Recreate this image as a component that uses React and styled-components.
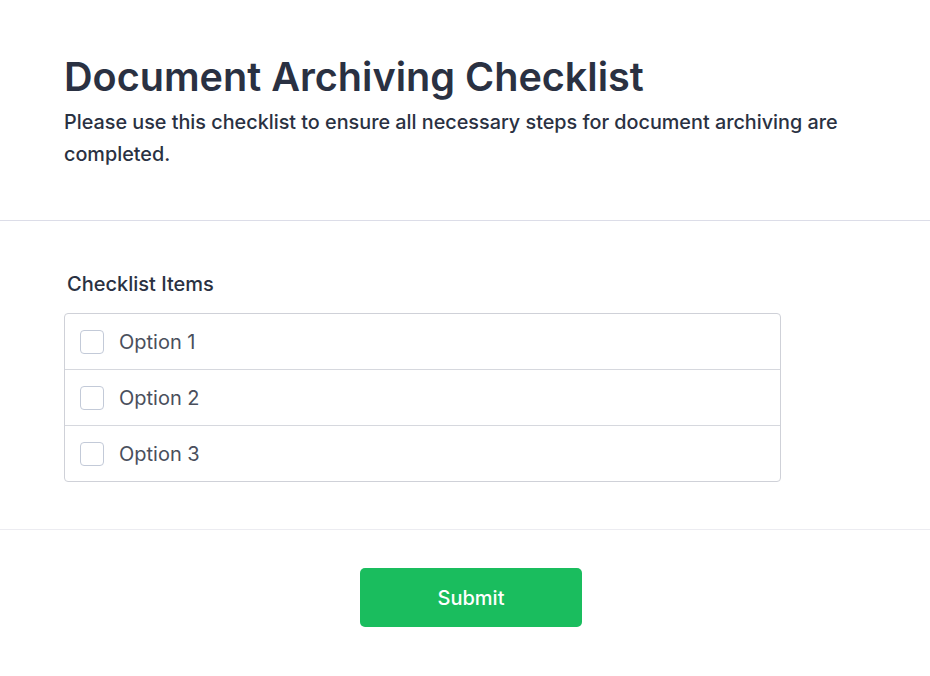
import React from 'react';
import styled, { createGlobalStyle } from 'styled-components';

const GlobalStyle = createGlobalStyle`
    body {
        margin: 0;
        background: #ffffff;
        font-family: Inter, "Noto Sans", sans-serif;
    }
`;

const Page = styled.div`
    width: 930px;
    min-height: 676px;
    background: #ffffff;
`;

const Header = styled.header`
    padding: 53px 64px 50px;
    border-bottom: 1px solid #dcdde8;
`;

const Title = styled.h1`
    margin: 0 0 5px;
    font-size: 39.6px;
    line-height: 48px;
    font-weight: 600;
    color: #2a3142;
`;

const Subtitle = styled.p`
    margin: 0;
    max-width: 800px;
    font-size: 19.8px;
    line-height: 32px;
    font-weight: 500;
    color: #2a3142;
`;

const Section = styled.section`
    padding: 51px 64px 47px;
    border-bottom: 1px solid #ececf1;
`;

const Label = styled.div`
    margin: 0 0 17px 3px;
    font-size: 20px;
    line-height: 24px;
    font-weight: 500;
    color: #2a3142;
`;

const List = styled.div`
    width: 715px;
    border: 1px solid #cfd1d8;
    border-radius: 4px;
    background: #fff;
`;

const Row = styled.label`
    display: flex;
    align-items: center;
    gap: 15px;
    height: 55px;
    padding: 0 15px;
    & + & {
        border-top: 1px solid #d6d8de;
    }
`;

const Box = styled.span`
    width: 24px;
    height: 24px;
    box-sizing: border-box;
    border: 1px solid #c3cad8;
    border-radius: 4px;
    background: #fff;
`;

const OptionText = styled.span`
    font-size: 20px;
    color: #4a4f5c;
`;

const Footer = styled.div`
    display: flex;
    justify-content: center;
    padding: 38px 0 38px 12px;
`;

const SubmitButton = styled.button`
    width: 222px;
    height: 59px;
    border: none;
    border-radius: 5px;
    background: #1abd5e;
    color: #ffffff;
    font-family: Inter, "Noto Sans", sans-serif;
    font-size: 20px;
    font-weight: 500;
    cursor: pointer;
`;

const options = ['Option 1', 'Option 2', 'Option 3'];

const App = () => {
    return (
        <Page>
            <GlobalStyle />
            <Header>
                <Title>Document Archiving Checklist</Title>
                <Subtitle>
                    Please use this checklist to ensure all necessary steps for document archiving are completed.
                </Subtitle>
            </Header>
            <Section>
                <Label>Checklist Items</Label>
                <List>
                    {options.map((o) => (
                        <Row key={o}>
                            <Box />
                            <OptionText>{o}</OptionText>
                        </Row>
                    ))}
                </List>
            </Section>
            <Footer>
                <SubmitButton>Submit</SubmitButton>
            </Footer>
        </Page>
    );
};

export default App;
